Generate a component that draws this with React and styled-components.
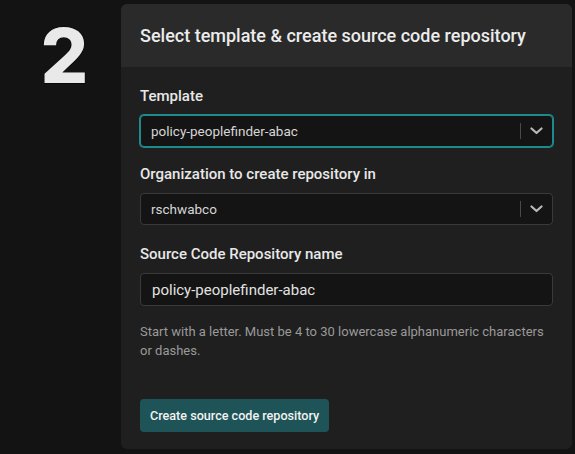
import React from "react";
import styled, { createGlobalStyle } from "styled-components";

const Global = createGlobalStyle`
  html, body { margin: 0; padding: 0; background: #131313; }
  body { font-family: Roboto, "Noto Sans", sans-serif; color: #e6e6e6; -webkit-font-smoothing: antialiased; }
  * { box-sizing: border-box; }
`;

const Page = styled.div`
  display: grid;
  grid-template-columns: 121px 451px;
  padding-top: 4px;
  height: 454px;
`;

const StepNumber = styled.div`
  text-align: center;
  padding-left: 8px;
  font-family: Inter, sans-serif;
  font-size: 75px;
  font-weight: 800;
  line-height: 1;
  margin-top: 14px;
  color: #e9e9e9;
  -webkit-text-stroke: 1px #000;
  paint-order: stroke fill;
`;

const Card = styled.section`
  background: #1f1f1f;
  border-radius: 6px;
  overflow: hidden;
  height: 445px;
  display: flex;
  flex-direction: column;
`;

const Header = styled.header`
  height: 63px;
  background: #2a2a2a;
  display: flex;
  align-items: center;
  padding: 0 19px;
  font-size: 18px;
  font-weight: 500;
  color: #ececec;
  white-space: nowrap;
`;

const Body = styled.div`
  padding: 19px 19px 0;
  display: flex;
  flex-direction: column;
`;

const Field = styled.div`
  display: flex;
  flex-direction: column;
  gap: 9px;
  margin-bottom: ${(p) => p.$mb || 0}px;
`;

const Label = styled.label`
  font-size: 15px;
  font-weight: 500;
  line-height: 20px;
  color: #e8e8e8;
`;

const SelectBox = styled.div`
  height: 32px;
  display: flex;
  align-items: center;
  background: #141414;
  border: 1px solid ${(p) => (p.$focused ? "#1d8a8c" : "#3a3a3a")};
  box-shadow: ${(p) => (p.$focused ? "0 0 0 1px #1d8a8c" : "none")};
  border-radius: 4px;
  padding-left: 10px;
`;

const SelectValue = styled.span`
  flex: 1;
  font-size: 13.5px;
  color: #d6d6d6;
`;

const Separator = styled.span`
  width: 1px;
  height: 16px;
  background: #4a4a4a;
`;

const Indicator = styled.span`
  width: 31px;
  display: flex;
  align-items: center;
  justify-content: center;
  color: #b8b8b8;
`;

const Input = styled.div`
  height: 33px;
  display: flex;
  align-items: center;
  background: #141414;
  border: 1px solid #3a3a3a;
  border-radius: 4px;
  padding-left: 11px;
  font-size: 15px;
  color: #e2e2e2;
`;

const Help = styled.p`
  margin: 16px 0 0;
  font-size: 13px;
  line-height: 19px;
  color: #9a9a9a;
`;

const Button = styled.button`
  align-self: flex-start;
  margin-top: 39px;
  height: 33px;
  padding: 0 10px;
  border: none;
  border-radius: 4px;
  background: #1e5457;
  color: #f2f2f2;
  font-family: inherit;
  font-size: 12.6px;
  font-weight: 500;
`;

const Chevron = () => (
  <svg width="13" height="8" viewBox="0 0 13 8" fill="none">
    <path d="M1.5 1.5 L6.5 6 L11.5 1.5" stroke="currentColor" strokeWidth="2.2" strokeLinecap="round" strokeLinejoin="round" />
  </svg>
);

const Select = ({ value, focused }) => (
  <SelectBox $focused={focused}>
    <SelectValue>{value}</SelectValue>
    <Separator />
    <Indicator>
      <Chevron />
    </Indicator>
  </SelectBox>
);

export default function App() {
  return (
    <>
      <Global />
      <Page>
        <StepNumber>2</StepNumber>
        <Card>
          <Header>Select template &amp; create source code repository</Header>
          <Body>
            <Field $mb={17}>
              <Label>Template</Label>
              <Select value="policy-peoplefinder-abac" focused />
            </Field>
            <Field $mb={19}>
              <Label>Organization to create repository in</Label>
              <Select value="rschwabco" />
            </Field>
            <Field>
              <Label>Source Code Repository name</Label>
              <Input>policy-peoplefinder-abac</Input>
            </Field>
            <Help>
              Start with a letter. Must be 4 to 30 lowercase alphanumeric characters
              or dashes.
            </Help>
            <Button>Create source code repository</Button>
          </Body>
        </Card>
      </Page>
    </>
  );
}
